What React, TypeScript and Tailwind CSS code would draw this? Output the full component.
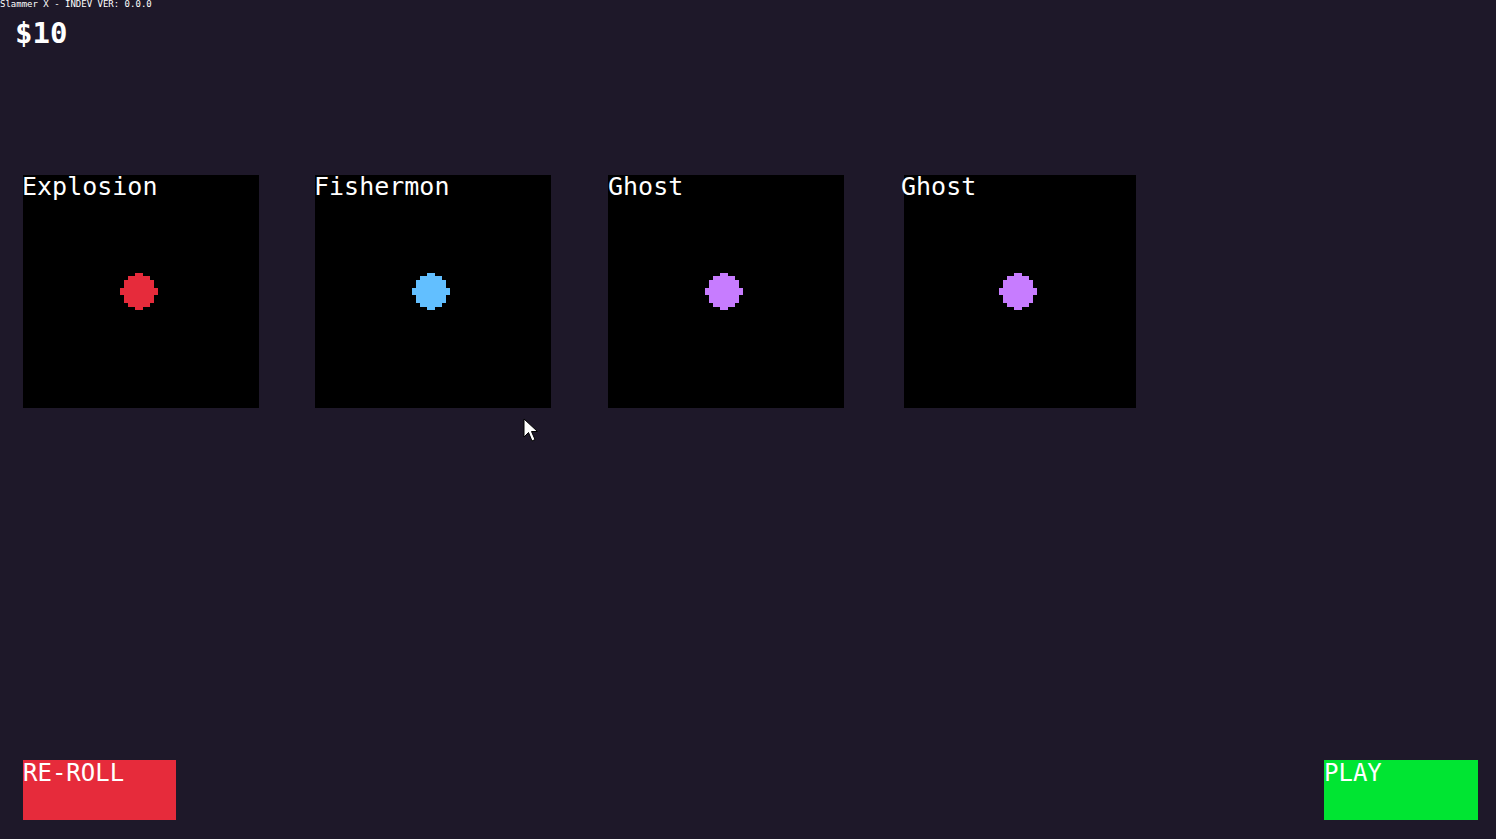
import React from 'react';

interface Slammer {
  name: string;
  color: string;
  cardClass: string;
  titleClass: string;
}

const slammers: Slammer[] = [
  { name: 'Explosion', color: '#e62b3b', cardClass: 'w-[236px]', titleClass: '-ml-px' },
  { name: 'Fishermon', color: '#62bfff', cardClass: 'ml-[56px] w-[236px]', titleClass: '-ml-px' },
  { name: 'Ghost', color: '#c77cff', cardClass: 'ml-[57px] w-[236px]', titleClass: 'ml-0' },
  { name: 'Ghost', color: '#c77cff', cardClass: 'ml-[60px] w-[232px]', titleClass: '-ml-[3px]' },
];

const PixelDot: React.FC<{ color: string }> = ({ color }) => (
  <svg width="38" height="37" viewBox="0 0 38 37" shapeRendering="crispEdges">
    <polygon
      fill={color}
      points="15,0 23,0 23,3 30,3 30,7 34,7 34,15 38,15 38,22 34,22 34,30 30,30 30,34 23,34 23,37 15,37 15,34 8,34 8,30 4,30 4,22 0,22 0,15 4,15 4,7 8,7 8,3 15,3"
    />
  </svg>
);

const Cursor: React.FC = () => (
  <svg width="18" height="26" viewBox="0 0 18 26" className="absolute left-[523px] top-[418px]">
    <path d="M1 1 L1 19 L5.5 14.5 L9 23 L12 21.5 L8.5 13.5 L14.5 13.5 Z" fill="#ffffff" stroke="#000000" strokeWidth="1" />
  </svg>
);

const App: React.FC = () => {
  return (
    <div className="relative flex h-[839px] w-full flex-col overflow-hidden bg-[#1e1829] font-['DejaVu_Sans_Mono',monospace] text-white">
      <div className="h-[9px] text-[9px] leading-[9px]">Slammer X - INDEV VER: 0.0.0</div>
      <div className="ml-[15px] mt-[6px] text-[29px] font-bold leading-[36px]">$10</div>

      <div className="mt-[124px] flex pl-[23px]">
        {slammers.map((s, i) => (
          <div key={i} className={`grid h-[233px] bg-black ${s.cardClass}`}>
            <div className={`col-start-1 row-start-1 self-start justify-self-start text-[25px] leading-[23px] ${s.titleClass}`}>
              {s.name}
            </div>
            <div className="col-start-1 row-start-1 -ml-[4px] self-center justify-self-center">
              <PixelDot color={s.color} />
            </div>
          </div>
        ))}
      </div>

      <div className="mt-auto mb-[19px] flex justify-between pl-[23px] pr-[18px]">
        <button className="h-[60px] w-[153px] bg-[#e62b3b] text-left">
          <div className="h-full text-[24px] leading-[26px] text-white">RE-ROLL</div>
        </button>
        <button className="h-[60px] w-[154px] bg-[#00e532] text-left">
          <div className="h-full text-[24px] leading-[26px] text-white">PLAY</div>
        </button>
      </div>

      <Cursor />
    </div>
  );
};

export default App;
